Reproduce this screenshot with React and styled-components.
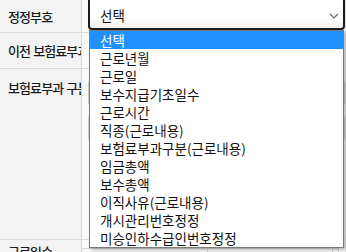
import React from "react";
import styled, { createGlobalStyle } from "styled-components";

const Global = createGlobalStyle`
  html, body { margin: 0; padding: 0; background: #fff; }
  body { font-family: "Noto Sans CJK KR", "Noto Sans", sans-serif; }
`;

const Page = styled.div`
  position: relative;
  width: 346px;
  height: 252px;
  overflow: hidden;
  background: #fff;
`;

const Table = styled.div`
  display: flex;
  flex-direction: column;
  border-right: 1px solid #e2e2e2;
`;

const Row = styled.div`
  display: grid;
  grid-template-columns: 82px 1fr;
  height: ${(p) => p.$h}px;
  border-bottom: 1px solid #dcdcdc;
  box-sizing: border-box;
`;

const Label = styled.div`
  display: flex;
  align-items: ${(p) => (p.$top ? "flex-start" : "center")};
  padding: ${(p) => (p.$top ? "2px 0 0 8px" : "0 0 0 8px")};
  background: #f3f3f3;
  border-right: 1px solid #d8d8d8;
  font-size: 13px;
  font-weight: 500;
  letter-spacing: -0.9px;
  word-spacing: 1px;
  color: #1a1a1a;
  white-space: nowrap;
  overflow: hidden;
`;

const Value = styled.div`
  display: flex;
  align-items: flex-start;
  padding-left: 6px;
  background: #fafafa;
`;

const SelectBox = styled.div`
  box-sizing: border-box;
  width: 257px;
  height: 33px;
  margin-top: -3px;
  border: 2px solid #1c1c1c;
  border-radius: 4px;
  background: linear-gradient(#ffffff 60%, #f1f1f1);
  display: flex;
  align-items: center;
  justify-content: space-between;
  padding: 3px 4px 0 10px;
  font-size: 13.5px;
  line-height: 16px;
  color: #111;
`;

const Chevron = styled.svg`
  width: 10px;
  height: 6px;
  margin-top: 1px;
`;

const Input = styled.div`
  box-sizing: border-box;
  width: 257px;
  height: 26px;
  margin-top: 11px;
  border: 1px solid #cfcfcf;
  border-radius: 3px;
  background: #eeeeee;
`;

const SubGrid = styled.div`
  display: grid;
  grid-template-columns: 126px 125px 1fr;
  width: 100%;
  margin: 8px 0 0 -6px;
  border-top: 1px solid #d6d6d6;
  height: 20px;
`;

const SubCell = styled.div`
  border-right: 1px solid #d6d6d6;
  background: #f7f7f7;
`;

const Dropdown = styled.ul`
  position: absolute;
  left: 89px;
  top: 30px;
  width: 255px;
  height: 218px;
  box-sizing: border-box;
  margin: 0;
  padding: 0;
  list-style: none;
  background: #fff;
  border: 1px solid #7a7a7a;
  box-shadow: 2px 2px 3px rgba(0, 0, 0, 0.25);
`;

const Item = styled.li`
  height: 18px;
  line-height: 18px;
  padding-left: 10px;
  font-size: 13.5px;
  color: ${(p) => (p.$active ? "#fff" : "#111")};
  background: ${(p) => (p.$active ? "#1e90ff" : "transparent")};
  white-space: nowrap;
`;

const options = [
  "선택",
  "근로년월",
  "근로일",
  "보수지급기초일수",
  "근로시간",
  "직종(근로내용)",
  "보험료부과구분(근로내용)",
  "임금총액",
  "보수총액",
  "이직사유(근로내용)",
  "개시관리번호정정",
  "미승인하수급인번호정정",
];

export default function App() {
  return (
    <Page>
      <Global />
      <Table>
        <Row $h={33}>
          <Label>정정부호</Label>
          <Value>
            <SelectBox>
              <span>선택</span>
              <Chevron viewBox="0 0 10 6">
                <path d="M1 1 L5 5 L9 1" fill="none" stroke="#666" strokeWidth="1.1" />
              </Chevron>
            </SelectBox>
          </Value>
        </Row>
        <Row $h={36}>
          <Label>이전 보험료부과</Label>
          <Value />
        </Row>
        <Row $h={35}>
          <Label>보험료부과 구분</Label>
          <Value>
            <Input />
          </Value>
        </Row>
        <Row $h={136}>
          <Label />
          <Value>
            <Input />
          </Value>
        </Row>
        <Row $h={40}>
          <Label $top>근로일수</Label>
          <Value>
            <SubGrid>
              <SubCell />
              <SubCell />
              <SubCell />
            </SubGrid>
          </Value>
        </Row>
      </Table>
      <Dropdown>
        {options.map((o, i) => (
          <Item key={o} $active={i === 0}>
            {o}
          </Item>
        ))}
      </Dropdown>
    </Page>
  );
}
